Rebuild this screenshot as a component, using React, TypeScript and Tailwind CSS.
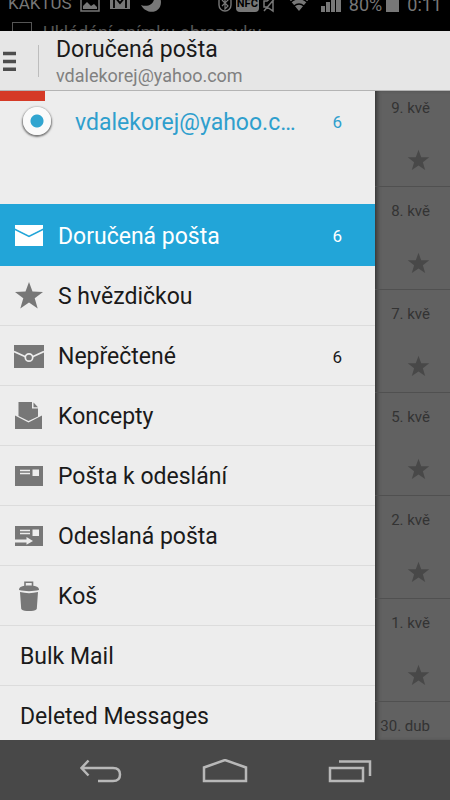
import type { ReactNode } from "react";
import clsx from "clsx";

interface Folder {
  id: string;
  label: string;
  count?: number;
  icon?: ReactNode;
}

const STAR_PATH = "M15 1l3.5 9.6 10.5.3-8.3 6.3 3 10.3L15 21.5l-8.7 6 3-10.3L1 10.9l10.5-.3z";

const FOLDERS: Folder[] = [
  {
    id: "inbox",
    label: "Doručená pošta",
    count: 6,
    icon: (
      <>
        <path d="M1 5h28v3.500L15 15.500 1 8.500z" fill="currentColor" />
        <path d="M1 10.300l14 7 14-7V26H1z" fill="currentColor" />
      </>
    ),
  },
  {
    id: "starred",
    label: "S hvězdičkou",
    icon: <path d={STAR_PATH} fill="currentColor" />,
  },
  {
    id: "unread",
    label: "Nepřečtené",
    count: 6,
    icon: (
      <>
        <path d="M0 4h30v23H0z" fill="currentColor" />
        <path d="M0 10.500l11.500 5.300M30 10.500l-11.500 5.300" stroke="#ededed" strokeWidth="1.700" />
        <circle cx="15" cy="16.500" r="3.700" stroke="#ededed" strokeWidth="1.700" />
      </>
    ),
  },
  {
    id: "drafts",
    label: "Koncepty",
    icon: (
      <>
        <path d="M4.500 1H18v6.500h6v8L14.500 20l-10-5z" fill="currentColor" />
        <path d="M19.500 1.500l4.500 4.800h-4.500z" fill="currentColor" />
        <path d="M1 14.500l13.500 7L28 14.500V28H1z" fill="currentColor" />
      </>
    ),
  },
  {
    id: "outbox",
    label: "Pošta k odeslání",
    icon: (
      <>
        <path d="M1 5h28v20H1z" fill="currentColor" />
        <path d="M6 9.500h10M6 12.500h10" stroke="#ededed" strokeWidth="1.500" />
        <path d="M18.500 8.500H25V15h-6.500z" fill="#ededed" />
      </>
    ),
  },
  {
    id: "sent",
    label: "Odeslaná pošta",
    icon: (
      <>
        <path d="M1 5h28v20H1z" fill="currentColor" />
        <path d="M6 9.500h10M6 12.500h10" stroke="#ededed" strokeWidth="1.500" />
        <path d="M18.500 8.500H25V15h-6.500z" fill="#ededed" />
        <path d="M1 18.500h11.500V16l6.500 4-6.500 3.700v-2.200H1z" fill="#ededed" />
      </>
    ),
  },
  {
    id: "trash",
    label: "Koš",
    icon: (
      <>
        <path d="M11 5V1.300h7.500V5" stroke="currentColor" strokeWidth="1.600" />
        <path d="M5 9C5 5.500 9 4.500 15 4.500S25 5.500 25 9c-6 1.500-14 1.500-20 0z" fill="currentColor" />
        <path d="M6 11c6 1.500 12 1.500 18 0l-1.200 16.700c-.3 3.200-15.300 3.200-15.600 0z" fill="currentColor" />
      </>
    ),
  },
  { id: "bulk", label: "Bulk Mail" },
  { id: "deleted", label: "Deleted Messages" },
];

const DATES = ["9. kvě", "8. kvě", "7. kvě", "5. kvě", "2. kvě", "1. kvě", "30. dub"];

function StatusBar() {
  return (
    <div className="h-[31px] shrink-0 overflow-hidden bg-black text-[#777]">
      <div className="-mt-3 flex h-8 items-center justify-between px-2 text-[18px]">
        <div className="flex items-center gap-2">
          <span className="text-[17px]">KAKTUS</span>
          <svg width="20" height="18" viewBox="0 0 20 18" fill="none">
            <path d="M1 0h18v16H1z" stroke="currentColor" strokeWidth="1.500" />
            <path d="M3 14v-3l4-4 4 4 3-2 3 3v2z" fill="currentColor" />
          </svg>
          <svg width="24" height="18" viewBox="0 0 24 18" fill="none">
            <path d="M2 0h20v14H2z" fill="currentColor" />
            <path d="M6 13V1l6 7 6-7v12" stroke="#000" strokeWidth="1.800" />
          </svg>
          <svg width="22" height="20" viewBox="0 0 22 20">
            <path d="M14 0c2 9-5 14-13 11 5 10 20 9 20-3 0-4-3-7-7-8z" fill="currentColor" />
          </svg>
        </div>
        <div className="flex items-center gap-1">
          <svg width="14" height="18" viewBox="0 0 14 18" fill="none">
            <rect x="1" y="0" width="12" height="16" rx="6" stroke="currentColor" strokeWidth="1.400" />
            <path d="M4 5l6 6-3 3V2l3 3-6 6" stroke="currentColor" strokeWidth="1.200" />
          </svg>
          <span className="rounded-sm bg-[#777] px-px text-[11px] leading-4 font-bold text-black">NFC</span>
          <svg width="14" height="18" viewBox="0 0 14 18" fill="none" stroke="currentColor" strokeWidth="1.500">
            <path d="M1 6h3l6-5v15l-6-4H1zM1 16L13 2" />
          </svg>
          <svg className="mx-2" width="20" height="18" viewBox="0 0 20 18">
            <path d="M0 4Q10-5 20 4L10 16z" fill="currentColor" />
            <path d="M2 7q8-7 16 0M5 11q5-4 10 0" fill="none" stroke="#000" strokeWidth="1.500" />
          </svg>
          <svg width="20" height="18" viewBox="0 0 20 18" fill="currentColor">
            <path d="M0 11h4v6H0zM5 7h4v10H5zM10 3h4v14h-4zM15 0h5v17h-5z" />
          </svg>
          <span className="pl-1">80%</span>
          <svg width="13" height="18" viewBox="0 0 13 18" fill="currentColor">
            <path d="M4 0h5v2h4v15H0V2h4z" />
          </svg>
          <span className="pl-1">0:11</span>
        </div>
      </div>
      <div className="flex h-6 items-center gap-[11px] px-3 text-[18px] text-[#555]">
        <span className="size-5 border border-[#555]" />
        <span>Ukládání snímku obrazovky</span>
      </div>
    </div>
  );
}

function TopBar() {
  return (
    <header className="flex h-15 shrink-0 items-center border-b border-[#b4b4b4] bg-[#e6e6e6]">
      <button type="button" aria-label="Menu" className="flex h-full w-[38px] items-center pl-[3px]">
        <svg width="13" height="20" viewBox="0 0 13 20" fill="none" stroke="#4d4d4d" strokeWidth="3.400">
          <path d="M0 2.500h13M0 10.500h13M0 18.300h13" />
        </svg>
      </button>
      <div className="h-8 w-px bg-[#bdbdbd]" />
      <div className="pl-[17px] pt-0.5">
        <h1 className="text-[23px] leading-7 text-[#1a1a1a]">Doručená pošta</h1>
        <p className="text-[18px] leading-6 text-[#808080]">vdalekorej@yahoo.com</p>
      </div>
    </header>
  );
}

function AccountSwitcher() {
  return (
    <div className="h-[113px] shrink-0">
      <div className="h-[10px] w-[45px] bg-[#d53a26]" />
      <label className="flex h-10 items-center pr-[33px] text-[#2f9fcd]">
        <input
          type="radio"
          name="account"
          defaultChecked
          className="ml-[23px] size-7 shrink-0 appearance-none rounded-full bg-[radial-gradient(circle,#31a5d0_6px,#fafafa_7px)] shadow-[0_1px_2px_1px_#777]"
        />
        <span className="ml-6 w-[225px] truncate pt-1 text-[23px]">vdalekorej@yahoo.com</span>
        <span className="ml-auto pt-1 text-[17px]">6</span>
      </label>
    </div>
  );
}

function FolderRow({ folder, active }: { folder: Folder; active: boolean }) {
  return (
    <li>
      <button
        type="button"
        aria-current={active}
        className={clsx(
          "flex w-full items-center pr-[33px] text-left text-[23px]",
          folder.icon ? "pl-[14px]" : "pl-5",
          active ? "h-[62px] bg-[#22a5d8] text-white" : "h-15 border-b border-[#dcdcdc] text-[#1a1a1a]"
        )}
      >
        {folder.icon && (
          <svg
            width="30"
            height="30"
            viewBox="0 0 30 30"
            fill="none"
            className={clsx("mr-[14px] shrink-0", active ? "text-white" : "text-[#777]")}
          >
            {folder.icon}
          </svg>
        )}
        <span className="pt-1">{folder.label}</span>
        {folder.count && <span className="ml-auto pt-1 text-[17px]">{folder.count}</span>}
      </button>
    </li>
  );
}

function MessageStrip() {
  return (
    <ul className="min-w-0 flex-1 overflow-hidden bg-[#616161] shadow-[inset_4px_0_4px_-2px_#333]">
      {DATES.map((date, i) => (
        <li
          key={date}
          className={clsx(
            "flex flex-col items-end border-b border-[#505050] pr-5 text-[#333]",
            i === 0 ? "h-24 pt-[5px]" : "h-[103px] pt-3"
          )}
        >
          <span className="text-[15px] leading-6">{date}</span>
          <button type="button" aria-label="Hvězdička" className="mt-[29px]">
            <svg width="23" height="23" viewBox="0 0 30 30" className="text-[#484848]">
              <path d={STAR_PATH} fill="currentColor" />
            </svg>
          </button>
        </li>
      ))}
    </ul>
  );
}

function NavBar() {
  return (
    <footer className="flex h-15 shrink-0 items-center justify-center gap-20 bg-[#484848] pt-1 text-[#b8b8b8]">
      <button type="button" aria-label="Zpět">
        <svg width="44" height="26" viewBox="0 0 44 26" fill="none" stroke="currentColor" strokeWidth="2.500">
          <path d="M10.500 1.500L3.500 9l7 7.500M4 9h31q7 0 7 6.500T35 22H20" />
        </svg>
      </button>
      <button type="button" aria-label="Domů">
        <svg width="46" height="26" viewBox="0 0 46 26" fill="none" stroke="currentColor" strokeWidth="2.500">
          <path d="M2 22V8.500L23 1l21 7.500V22z" />
        </svg>
      </button>
      <button type="button" aria-label="Poslední aplikace">
        <svg width="44" height="26" viewBox="0 0 44 26" fill="none" stroke="currentColor" strokeWidth="2.500">
          <path d="M2 9h33v13H2zM11 2.500h31V17" />
        </svg>
      </button>
    </footer>
  );
}

export default function App() {
  return (
    <div className="flex h-screen flex-col overflow-hidden font-[Roboto,sans-serif]">
      <StatusBar />
      <TopBar />
      <main className="flex min-h-0 flex-1">
        <nav className="flex w-5/6 flex-col overflow-y-auto bg-[#ededed] [scrollbar-width:none]">
          <AccountSwitcher />
          <ul>
            {FOLDERS.map((folder) => (
              <FolderRow key={folder.id} folder={folder} active={folder.id === "inbox"} />
            ))}
          </ul>
        </nav>
        <MessageStrip />
      </main>
      <NavBar />
    </div>
  );
}
